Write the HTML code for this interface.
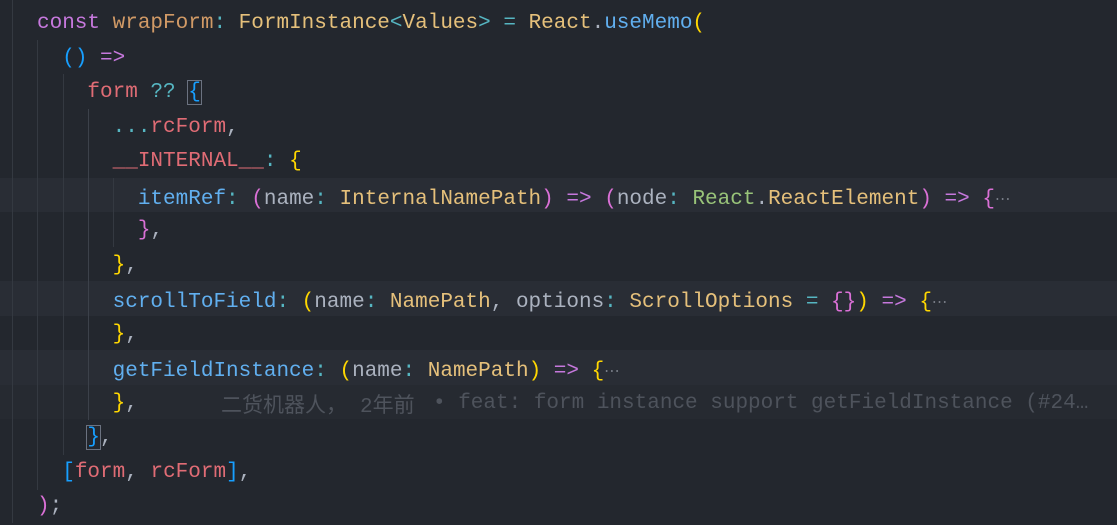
<!DOCTYPE html>
<html><head><meta charset="utf-8"><style>
html,body{margin:0;padding:0;}
body{width:1117px;height:523px;background:#23272e;position:relative;overflow:hidden;font-family:"Liberation Mono","Noto Sans CJK SC",monospace;font-size:21px;}
.row{position:absolute;left:0;width:1117px;height:34.5px;}
.hl{background:#292d35;}
.g{position:absolute;width:1px;background:#343941;}
.l{position:absolute;left:37px;white-space:pre;line-height:34.5px;height:34.5px;color:#abb2bf;margin-top:2px;}
.k{color:#c678dd}.v{color:#d19a66}.t{color:#e5c07b}.c{color:#56b6c2}.f{color:#61afef}
.r{color:#e06c75}.y{color:#ffd700}.b{color:#179fff}.m{color:#da70d6}.gr{color:#98c379}.p{color:#abb2bf}
.e{color:#7f848e;font-size:14px;vertical-align:4px}
.box{outline:1px solid #6b7280;outline-offset:0}
.bl{position:absolute;top:386.5px;line-height:34.5px;color:#4e535c;white-space:pre;}
</style></head><body>
<div class="row hl" style="top:177.5px"></div>
<div class="row hl" style="top:281px"></div>
<div class="row hl" style="top:350px"></div>
<div class="row hl" style="top:384.5px;background:#262a31"></div>
<div class="g" style="left:12px;top:0;height:523px"></div>
<div class="g" style="left:37px;top:40px;height:450px"></div>
<div class="g" style="left:63px;top:74px;height:381px"></div>
<div class="g" style="left:88px;top:109px;height:311px;background:#3c414a"></div>
<div class="g" style="left:113px;top:178px;height:69px"></div>

<div class="l" style="top:5px"><span class="k">const</span> <span class="v">wrapForm</span><span class="c">:</span> <span class="t">FormInstance</span><span class="c">&lt;</span><span class="t">Values</span><span class="c">&gt;</span> <span class="c">=</span> <span class="t">React</span><span class="p">.</span><span class="f">useMemo</span><span class="y">(</span></div>
<div class="l" style="top:39.5px">  <span class="b">()</span> <span class="k">=&gt;</span></div>
<div class="l" style="top:74px">    <span class="r">form</span> <span class="c">??</span> <span class="b box">{</span></div>
<div class="l" style="top:108.5px">      <span class="c">...</span><span class="r">rcForm</span>,</div>
<div class="l" style="top:143px">      <span class="r">__INTERNAL__</span><span class="c">:</span> <span class="y">{</span></div>
<div class="l" style="top:177.5px">        <span class="f">itemRef</span><span class="c">:</span> <span class="m">(</span>name<span class="c">:</span> <span class="t">InternalNamePath</span><span class="m">)</span> <span class="k">=&gt;</span> <span class="m">(</span>node<span class="c">:</span> <span class="gr">React</span>.<span class="t">ReactElement</span><span class="m">)</span> <span class="k">=&gt;</span> <span class="m">{</span><span class="e">⋯</span></div>
<div class="l" style="top:212px">        <span class="m">}</span>,</div>
<div class="l" style="top:246.5px">      <span class="y">}</span>,</div>
<div class="l" style="top:281px">      <span class="f">scrollToField</span><span class="c">:</span> <span class="y">(</span>name<span class="c">:</span> <span class="t">NamePath</span>, options<span class="c">:</span> <span class="t">ScrollOptions</span> <span class="c">=</span> <span class="m">{}</span><span class="y">)</span> <span class="k">=&gt;</span> <span class="y">{</span><span class="e">⋯</span></div>
<div class="l" style="top:315.5px">      <span class="y">}</span>,</div>
<div class="l" style="top:350px">      <span class="f">getFieldInstance</span><span class="c">:</span> <span class="y">(</span>name<span class="c">:</span> <span class="t">NamePath</span><span class="y">)</span> <span class="k">=&gt;</span> <span class="y">{</span><span class="e">⋯</span></div>
<div class="l" style="top:384.5px">      <span class="y">}</span>,</div>
<div class="l" style="top:419px">    <span class="b box">}</span>,</div>
<div class="l" style="top:453.5px">  <span class="b">[</span><span class="r">form</span>, <span class="r">rcForm</span><span class="b">]</span>,</div>
<div class="l" style="top:488px"><span class="m">)</span>;</div>

<div class="bl" style="left:221px;font-family:'Noto Sans CJK SC',sans-serif;">二货机器人，</div>
<div class="bl" style="left:360px;">2<span style="font-family:'Noto Sans CJK SC',sans-serif">年前</span></div>
<div class="bl" style="left:433px;">• feat: form instance support getFieldInstance (#24…</div>
</body></html>
